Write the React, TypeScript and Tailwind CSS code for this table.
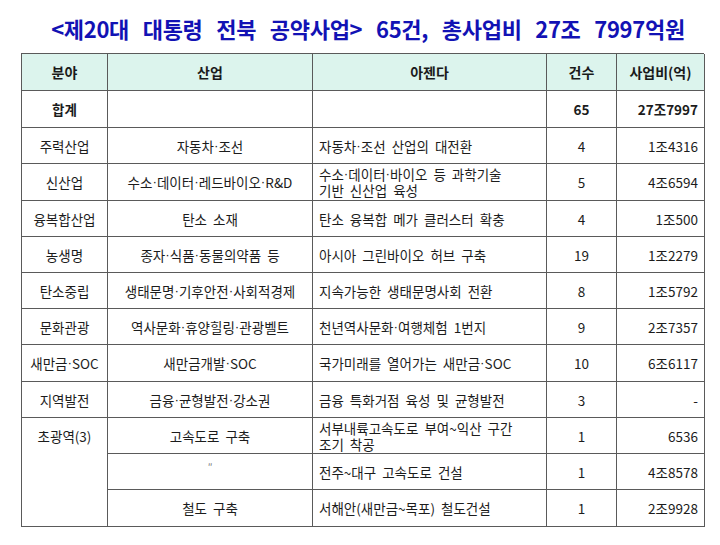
import React from "react";

type Row = {
  a?: string;
  b: string;
  c: string;
  d: string;
  e: string;
  bold?: boolean;
  ditto?: boolean;
};

const rows: Row[] = [
  { a: "합계", b: "", c: "", d: "65", e: "27조7997", bold: true },
  { a: "주력산업", b: "자동차·조선", c: "자동차·조선 산업의 대전환", d: "4", e: "1조4316" },
  { a: "신산업", b: "수소·데이터·레드바이오·R&D", c: "수소·데이터·바이오 등 과학기술\n기반 신산업 육성", d: "5", e: "4조6594" },
  { a: "융복합산업", b: "탄소 소재", c: "탄소 융복합 메가 클러스터 확충", d: "4", e: "1조500" },
  { a: "농생명", b: "종자·식품·동물의약품 등", c: "아시아 그린바이오 허브 구축", d: "19", e: "1조2279" },
  { a: "탄소중립", b: "생태문명·기후안전·사회적경제", c: "지속가능한 생태문명사회 전환", d: "8", e: "1조5792" },
  { a: "문화관광", b: "역사문화·휴양힐링·관광벨트", c: "천년역사문화·여행체험 1번지", d: "9", e: "2조7357" },
  { a: "새만금·SOC", b: "새만금개발·SOC", c: "국가미래를 열어가는 새만금·SOC", d: "10", e: "6조6117" },
  { a: "지역발전", b: "금융·균형발전·강소권", c: "금융 특화거점 육성 및 균형발전", d: "3", e: "-" },
];

const sub: Row[] = [
  { b: "고속도로 구축", c: "서부내륙고속도로 부여~익산 구간\n조기 착공", d: "1", e: "6536" },
  { b: "″", c: "전주~대구 고속도로 건설", d: "1", e: "4조8578", ditto: true },
  { b: "철도 구축", c: "서해안(새만금~목포) 철도건설", d: "1", e: "2조9928" },
];

function T({ s }: { s?: string }) {
  if (!s) return null;
  const parts = s.split("·");
  return (
    <>
      {parts.map((p, i) => (
        <React.Fragment key={i}>
          {i > 0 && (
            <span
              className="inline-block h-[16px] leading-[16px] align-top"
              style={{ fontFamily: '"Liberation Sans", sans-serif' }}
            >
              ·
            </span>
          )}
          {p}
        </React.Fragment>
      ))}
    </>
  );
}

const cell = "border-r border-b border-[#5a5a5a] flex items-center";

export default function App() {
  return (
    <div
      className="w-[720px] h-[545px] bg-white text-[#1c1c1c] overflow-hidden"
      style={{ fontFamily: '"Noto Sans CJK KR", "Noto Sans", sans-serif' }}
    >
      <div className="h-[53px] flex items-start justify-center pl-[16px] pt-[13px]">
        <h1 className="text-[22px] font-bold text-[#1212b4] leading-[30px] tracking-[-0.3px] [word-spacing:9px] whitespace-pre">
          {"<제20대 대통령 전북 공약사업> 65건, 총사업비 27조 7997억원"}
        </h1>
      </div>
      <div className="ml-[21px] w-[683px] grid grid-cols-[86px_205px_234px_70px_88px] grid-rows-[37px_37px_36px_37px_36px_36px_36px_36px_37px_36px_36px_36px_37px] border-t border-l border-[#5a5a5a] text-[13.5px] leading-[16px] [word-spacing:3px]">
        {["분야", "산업", "아젠다", "건수", "사업비(억)"].map((h) => (
          <div key={h} className={`${cell} justify-center bg-[#dcf4ed] font-bold text-[14px] text-[#1a1a1a]`}>
            {h}
          </div>
        ))}
        {rows.map((r, i) => (
          <React.Fragment key={i}>
            <div className={`${cell} justify-center ${r.bold ? "font-bold" : ""}`}>
              <T s={r.a} />
            </div>
            <div className={`${cell} justify-center`}>
              <T s={r.b} />
            </div>
            <div className={`${cell} pl-[6px] whitespace-pre-line`}>
              <div>
                <T s={r.c} />
              </div>
            </div>
            <div className={`${cell} justify-center ${r.bold ? "font-bold" : ""}`}>{r.d}</div>
            <div className={`${cell} justify-end pr-[6px] ${r.bold ? "font-bold" : ""}`}>{r.e}</div>
          </React.Fragment>
        ))}
        <div className="row-span-3 border-r border-b border-[#5a5a5a] flex justify-center pt-[10px]">
          초광역(3)
        </div>
        {sub.map((r, i) => (
          <React.Fragment key={"s" + i}>
            <div
              className={`${cell} justify-center ${r.ditto ? "items-start pt-[5px] text-[10px] text-[#777]" : ""}`}
            >
              {r.b}
            </div>
            <div className={`${cell} pl-[6px] whitespace-pre-line`}>
              <div>
                <T s={r.c} />
              </div>
            </div>
            <div className={`${cell} justify-center`}>{r.d}</div>
            <div className={`${cell} justify-end pr-[6px]`}>{r.e}</div>
          </React.Fragment>
        ))}
      </div>
    </div>
  );
}
